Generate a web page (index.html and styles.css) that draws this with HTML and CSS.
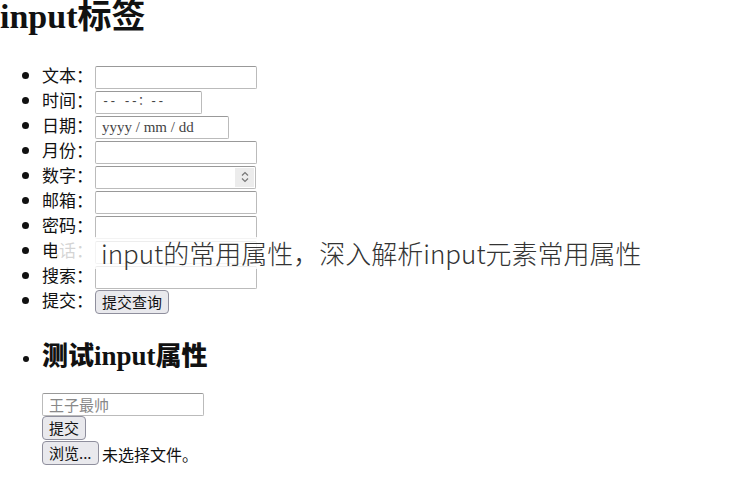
FILE: index.html
```html
<!DOCTYPE html>
<html lang="zh-CN">
<head>
    <meta charset="UTF-8">
    <meta name="viewport" content="width=device-width, initial-scale=1.0">
    <title>input标签</title>
    <link rel="stylesheet" href="styles.css">
</head>
<body>
    <h1>input标签</h1>

    <!-- 各种类型的 input -->
    <ul class="types">
        <li>文本：<input type="text" class="field"></li>
        <li>时间：<span class="field fake time">-- --：--</span></li>
        <li>日期：<span class="field fake date">yyyy / mm / dd</span></li>
        <li>月份：<input type="text" class="field"></li>
        <li>数字：<span class="field fake number"><span class="spin">
            <svg width="10" height="14" viewBox="0 0 10 14"><path d="M2 5.5 L5 2.5 L8 5.5 M2 8.5 L5 11.5 L8 8.5" fill="none" stroke="#777" stroke-width="1.2"/></svg>
        </span></span></li>
        <li>邮箱：<input type="text" class="field"></li>
        <li>密码：<input type="password" class="field"></li>
        <li>电话：<input type="text" class="field"></li>
        <li>搜索：<input type="text" class="field"></li>
        <li>提交：<button class="btn">提交查询</button></li>
    </ul>

    <!-- 测试属性 -->
    <ul class="attrs">
        <li><h2>测试<span class="latin">input</span>属性</h2></li>
    </ul>
    <form class="test">
        <input type="text" class="field" placeholder="王子最帅"><br>
        <button type="button" class="btn">提交</button><br>
        <button type="button" class="btn">浏览...</button> <span class="nofile">未选择文件。</span>
    </form>

    <div class="banner">input的常用属性，深入解析input元素常用属性</div>
</body>
</html>
```

FILE: styles.css
```css
body {
    margin: 0;
    font-family: "Noto Sans CJK SC", "Liberation Sans", sans-serif;
    font-size: 16px;
    color: #111;
    background-color: #fff;
}
h1 {
    margin: -2px 0 0;
    font-family: "Liberation Serif", "Noto Sans CJK SC", serif;
    font-size: 34px;
    line-height: 38px;
    font-weight: bold;
}
ul {
    margin: 0;
    padding-left: 42px;
}
.types {
    margin-top: 26px;
    font-size: 17px;
}
.types li {
    height: 25px;
    line-height: 25px;
}
.field {
    box-sizing: border-box;
    display: inline-block;
    vertical-align: middle;
    width: 162px;
    height: 23px;
    margin: 0 0 0 2px;
    padding: 1px 6px;
    border: 1px solid #bbb;
    border-top-color: #999;
    border-radius: 2px;
    background: #fff;
    font-family: "Liberation Serif", serif;
    font-size: 14px;
    line-height: 19px;
    color: #444;
}
.fake.time {
    width: 107px;
    font-family: "Liberation Mono", monospace;
    font-size: 12px;
}
.fake.date {
    width: 134px;
    font-size: 15px;
}
.fake.number {
    position: relative;
    width: 161px;
}
.spin {
    position: absolute;
    right: 1px;
    top: 1px;
    width: 19px;
    height: 19px;
    background: #ececec;
    display: flex;
    justify-content: center;
    align-items: center;
}
.btn {
    box-sizing: border-box;
    height: 24px;
    margin: 0;
    padding: 0 6px;
    vertical-align: middle;
    background-color: #e9e9ed;
    border: 1px solid #8f8f9d;
    border-radius: 4px;
    font-family: "Noto Sans CJK SC", sans-serif;
    font-size: 15px;
    line-height: 20px;
    color: #111;
}
.types .btn {
    margin-left: 2px;
}
.attrs {
    margin-top: 27px;
}
h2 {
    margin: 0;
    font-family: "Noto Sans CJK SC", sans-serif;
    font-size: 26px;
    line-height: 30px;
    font-weight: 900;
}
h2 .latin {
    font-family: "Liberation Serif", serif;
    font-size: 27px;
}
.test {
    margin-top: 22px;
    padding-left: 42px;
    line-height: 0;
}
.test .field {
    margin-left: 0;
    font-family: "Noto Sans CJK SC", sans-serif;
    font-size: 15px;
}
.test .field::placeholder {
    color: #888;
}
.test .btn {
    margin-bottom: 1px;
}
.nofile {
    font-size: 16px;
    line-height: 24px;
    vertical-align: middle;
}
.banner {
    position: absolute;
    left: 57px;
    top: 237px;
    width: 545px;
    height: 32px;
    padding-left: 44px;
    background: rgba(255, 255, 255, 0.82);
    font-family: "Noto Sans CJK SC", sans-serif;
    font-weight: 300;
    font-size: 26px;
    line-height: 32px;
    color: #333;
    white-space: nowrap;
}
```
